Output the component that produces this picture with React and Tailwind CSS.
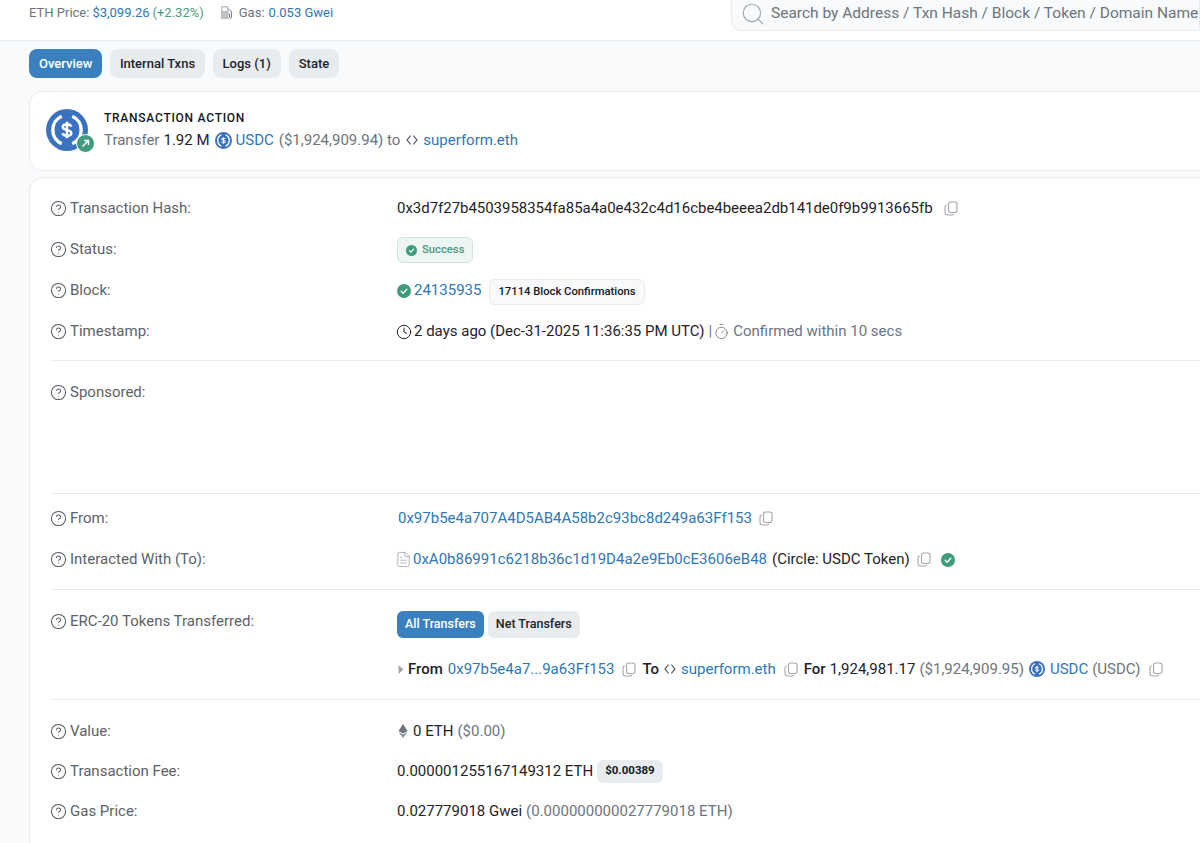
import React from "react"
import { CircleHelp, Clock, FileText, Search, Timer } from "lucide-react"

const blue = "text-[#2f77b4]"

const Help = () => <CircleHelp size={17} strokeWidth={1.5} className="text-[#555b62] shrink-0" />

const CopyBtn = ({ className = "" }) => (
	<svg width="14" height="15" viewBox="0 0 14 15" fill="none" stroke="#a3a8ae" strokeWidth="1.100" className={`shrink-0 ${className}`}>
		<rect x="4.500" y="1" width="8.500" height="10.500" rx="2.200" />
		<path d="M2.800 3.800C1.600 4.100 1 4.900 1 6v5.500C1 13 2 14 3.500 14h4.200c1 0 1.800-.5 2.100-1.300" />
	</svg>
)

const CheckDot = ({ size = 14 }) => (
	<svg width={size} height={size} viewBox="0 0 16 16" className="shrink-0">
		<circle cx="8" cy="8" r="8" fill="#3f9b7c" />
		<path d="M4.8 8.3l2.2 2.2 4.2-4.4" fill="none" stroke="#fff" strokeWidth="1.6" strokeLinecap="round" strokeLinejoin="round" />
	</svg>
)

const UsdcLogo = ({ size = 16 }) => (
	<svg width={size} height={size} viewBox="0 0 32 32" className="shrink-0">
		<circle cx="16" cy="16" r="16" fill="#3a72bf" />
		<path d="M12 5.500A11.500 11.500 0 0 0 12 26.500M20 5.500A11.500 11.500 0 0 1 20 26.500" fill="none" stroke="#fff" strokeWidth="2.600" />
		<path d="M19.300 13.500c-.4-1.300-1.600-1.900-3.300-1.900-1.900 0-3.200.8-3.200 2.200 0 3.200 6.500 1.400 6.500 4.400 0 1.400-1.400 2.200-3.300 2.200-1.800 0-3-.7-3.400-2M16 9.800v12.400" fill="none" stroke="#fff" strokeWidth="1.900" />
	</svg>
)

const EnsMark = () => (
	<svg width="12" height="12" viewBox="0 0 12 12" className="shrink-0">
		<path d="M4.6 1.600L1 6l3.600 4.400M7.400 1.600L11 6l-3.600 4.400" fill="none" stroke="#5d6369" strokeWidth="1.200" />
	</svg>
)

const Row = ({ label, short, children }) => (
	<div className={`flex items-center ${short ? "h-[40px]" : "h-[41px]"}`}>
		<div className="flex w-[347px] shrink-0 items-center gap-[3px] text-[#5c6269]">
			<Help />
			<span>{label}</span>
		</div>
		<div className="flex items-center whitespace-nowrap text-[#1e2328]">{children}</div>
	</div>
)

const App = () => (
	<div className="h-[843px] w-[1200px] overflow-hidden bg-[#f9fafc] text-[15px] [font-family:Roboto,sans-serif]">
		{/* Top bar */}
		<header className="flex h-[41px] items-start justify-between border-b border-[#e9ecef] bg-white pl-[29px]">
			<div className="flex items-center pt-[3px] text-[13px] text-[#6c757d]">
				<span>ETH Price:</span>
				<span className={`ml-[3px] ${blue}`}>$3,099.26</span>
				<span className="ml-[3px] text-[#4a9a80]">(+2.32%)</span>
				<svg width="14" height="15" viewBox="0 0 14 15" className="ml-[16px]">
					<path d="M1 2.500C1 1.500 1.700 1 2.500 1h4.500C7.800 1 8.500 1.500 8.500 2.500V14H1z" fill="#bcc1c6" />
					<path d="M2.500 2.500h4.500v3.500h-4.500z" fill="#fff" />
					<path d="M8.500 4l3 2.500v5.500c0 1.500-2 1.500-2 0V9H8.500" fill="none" stroke="#777d83" strokeWidth="1" />
				</svg>
				<span className="ml-[5px]">Gas:</span>
				<span className={`ml-1 ${blue}`}>0.053 Gwei</span>
			</div>
			<div className="-mt-[10px] flex h-[41px] w-[469px] shrink-0 items-center rounded-bl-[10px] border border-[#e9ecef] bg-[#f9fafb] pl-[8px] pt-[7px] text-[15.500px] text-[#6c757d]">
				<Search size={26} strokeWidth={1.1} className="shrink-0 text-[#a5aaaf]" />
				<span className="ml-[5px] whitespace-nowrap">Search by Address / Txn Hash / Block / Token / Domain Name</span>
			</div>
		</header>

		<div className="pl-[29px]">
			{/* Tabs */}
			<nav className="flex gap-2 pt-[8px] text-[13px] font-medium text-[#1e2328]">
				<span className="flex h-[29px] items-center rounded-lg bg-[#3a7fbe] px-[10px] text-white">Overview</span>
				<span className="flex h-[29px] items-center rounded-lg bg-[#e9ecef] px-[9.500px]">Internal Txns</span>
				<span className="flex h-[29px] items-center rounded-lg bg-[#e9ecef] px-[10px]">Logs (1)</span>
				<span className="flex h-[29px] items-center rounded-lg bg-[#e9ecef] px-[10px]">State</span>
			</nav>

			{/* Transaction action */}
			<section className="mt-[13px] flex h-[80px] rounded-l-[14px] border border-r-0 border-[#e9ecef] bg-white pl-[16px] pt-[17px]">
				<div className="relative h-[42px] w-[42px]">
					<UsdcLogo size={42} />
					<span className="absolute -bottom-[2px] -right-[7px] flex h-[19px] w-[19px] items-center justify-center rounded-full border border-white bg-[#3f9b7c]">
						<svg width="9" height="9" viewBox="0 0 9 9">
							<path d="M1.500 7.500L7.500 1.500M3 1.500h4.500V6" fill="none" stroke="#fff" strokeWidth="1.400" />
						</svg>
					</span>
				</div>
				<div className="ml-[16px]">
					<div className="text-[12px] font-medium leading-[18px] tracking-[0.75px] text-[#14181c]">TRANSACTION ACTION</div>
					<div className="mt-[2px] flex items-center text-[#6c757d]">
						<span>Transfer</span>
						<span className="ml-1 text-[#1e2328]">1.92 M</span>
						<span className="ml-[5px]"><UsdcLogo size={17} /></span>
						<span className={`ml-[4px] ${blue}`}>USDC</span>
						<span className="ml-[5px]">($1,924,909.94) to</span>
						<span className="ml-[6px]"><EnsMark /></span>
						<span className={`ml-[5px] ${blue}`}>superform.eth</span>
					</div>
				</div>
			</section>

			{/* Details */}
			<main className="mt-[6px] h-[700px] rounded-l-[14px] border border-r-0 border-[#e9ecef] bg-white pl-[20px] pt-[10px]">
				<Row label="Transaction Hash:">
					<span className="tracking-[-0.03px]">0x3d7f27b4503958354fa85a4a0e432c4d16cbe4beeea2db141de0f9b9913665fb</span>
					<CopyBtn className="ml-[11px]" />
				</Row>
				<Row label="Status:">
					<span className="flex h-[26px] items-center gap-[5px] rounded-md border border-[#cfe4dc] bg-[#eef6f3] px-[8px] pt-[1px] text-[11.250px] font-medium text-[#4a9a80]">
						<CheckDot size={11} />
						Success
					</span>
				</Row>
				<Row label="Block:">
					<CheckDot />
					<span className={`ml-[3px] ${blue}`}>24135935</span>
					<span className="ml-[8px] mt-[2px] flex h-[26px] items-center rounded-md border border-[#e9ecef] bg-[#f8f9fa] px-[8px] pt-[1px] text-[11.250px] font-medium text-[#14181c]">17114 Block Confirmations</span>
				</Row>
				<Row label="Timestamp:">
					<Clock size={16} strokeWidth={1.5} className="-ml-[1px]" />
					<span className="ml-[2px]">2 days ago (Dec-31-2025 11:36:35 PM UTC)</span>
					<span className="ml-[4px] text-[#6c757d]">|</span>
					<Timer size={17} strokeWidth={1.2} className="ml-[1px] text-[#6c757d]" />
					<span className="ml-[3px] text-[#6c757d]">Confirmed within 10 secs</span>
				</Row>

				<div className="mt-[8px] h-[134px] border-y border-[#e9ecef] pt-[11px]">
					<Row label="Sponsored:" />
				</div>

				<div className="pt-[4px]">
					<Row label="From:">
						<span className={`ml-[1px] ${blue}`}>0x97b5e4a707A4D5AB4A58b2c93bc8d249a63Ff153</span>
						<CopyBtn className="ml-[7px]" />
					</Row>
					<Row label="Interacted With (To):">
						<FileText size={17} strokeWidth={1.1} className="-ml-[2px] text-[#9aa0a6]" />
						<span className={`ml-[1px] ${blue}`}>0xA0b86991c6218b36c1d19D4a2e9Eb0cE3606eB48</span>
						<span className="ml-[5px]">(Circle: USDC Token)</span>
						<CopyBtn className="ml-[7px]" />
						<span className="ml-[10px]"><CheckDot /></span>
					</Row>
				</div>

				<div className="mt-[9px] h-[111px] border-y border-[#e9ecef]">
					<div className="flex h-[61px] items-start pt-[21px]">
						<div className="-mt-[1px] flex w-[347px] shrink-0 items-center gap-[3px] text-[#5c6269]">
							<Help />
							<span>ERC-20 Tokens Transferred:</span>
						</div>
						<div className="flex gap-[4px] text-[12.500px] font-medium">
							<span className="flex h-[27px] items-center rounded-md bg-[#3a7fbe] px-[8px] text-white">All Transfers</span>
							<span className="flex h-[27px] items-center rounded-md bg-[#e9ecef] px-[8px] text-[#1e2328]">Net Transfers</span>
						</div>
					</div>
					<div className="flex h-[36px] items-center whitespace-nowrap pl-[347px] text-[#1e2328]">
						<svg width="6" height="9" viewBox="0 0 6 9" className="ml-[1px]">
							<path d="M.5 0L5.500 4.500.5 9z" fill="#a3a8ae" />
						</svg>
						<span className="ml-[4px] font-medium">From</span>
						<span className={`ml-[5px] ${blue}`}>0x97b5e4a7...9a63Ff153</span>
						<CopyBtn className="ml-[8px]" />
						<span className="ml-[6px] font-medium">To</span>
						<span className="ml-[5px]"><EnsMark /></span>
						<span className={`ml-[5px] ${blue}`}>superform.eth</span>
						<CopyBtn className="ml-[8px]" />
						<span className="ml-[6px] font-medium">For</span>
						<span className="ml-1">1,924,981.17</span>
						<span className="ml-[4px] text-[#6c757d]">($1,924,909.95)</span>
						<span className="ml-[5px]"><UsdcLogo size={16} /></span>
						<span className={`ml-[5px] ${blue}`}>USDC</span>
						<span className="ml-[4px] text-[#6c757d]">(USDC)</span>
						<CopyBtn className="ml-[8px]" />
					</div>
				</div>

				<div className="pt-[11px]">
					<Row short label="Value:">
						<svg width="10" height="14" viewBox="0 0 10 14" className="ml-[1px]">
							<path d="M5 0L.5 7 5 9.500 9.500 7z" fill="#6c757d" />
							<path d="M.5 8L5 14l4.500-6L5 10.500z" fill="#8a9097" />
						</svg>
						<span className="ml-[5px]">0 ETH</span>
						<span className="ml-1 text-[#6c757d]">($0.00)</span>
					</Row>
					<Row short label="Transaction Fee:">
						<span>0.000001255167149312 ETH</span>
						<span className="ml-[4px] flex h-[23px] items-center rounded-md bg-[#e9ecef] px-[8px] text-[11.500px] font-bold text-[#14181c]">$0.00389</span>
					</Row>
					<Row short label="Gas Price:">
						<span>0.027779018 Gwei</span>
						<span className="ml-1 text-[#6c757d]">(0.000000000027779018 ETH)</span>
					</Row>
				</div>
			</main>
		</div>
	</div>
)

export default App
